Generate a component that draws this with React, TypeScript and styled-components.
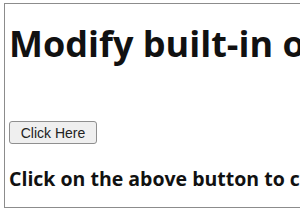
import React from 'react';
import styled, { createGlobalStyle } from 'styled-components';

const GlobalStyle = createGlobalStyle`
  html, body {
    margin: 0;
    padding: 0;
    background: #fff;
    overflow: hidden;
  }
`;

const Frame = styled.div`
  margin: 3px 0 0 4px;
  width: 340px;
  height: 205px;
  box-sizing: border-box;
  border: 1px solid #8c8c8c;
  border-right: none;
  padding: 0 0 0 4px;
  display: flex;
  flex-direction: column;
  overflow: hidden;
  font-family: 'Open Sans', 'Noto Sans', sans-serif;
  color: #111;
`;

const Heading = styled.h1`
  margin: 20px 0 0 0;
  font-size: 36px;
  line-height: 40px;
  font-weight: 700;
  white-space: nowrap;
`;

const ClickButton = styled.button`
  margin-top: 57px;
  align-self: flex-start;
  width: 88px;
  height: 23px;
  padding: 0;
  font-family: Arial, 'Liberation Sans', sans-serif;
  font-size: 14px;
  color: #222;
  background: #efefef;
  border: 1px solid #8f8f8f;
  border-radius: 3px;
`;

const Note = styled.p`
  margin: 23px 0 0 0;
  font-size: 19.5px;
  line-height: 24px;
  font-weight: 700;
  white-space: nowrap;
`;

export default function App() {
  return (
    <>
      <GlobalStyle />
      <Frame>
        <Heading>Modify built-in object</Heading>
        <ClickButton>Click Here</ClickButton>
        <Note>Click on the above button to call the modified function</Note>
      </Frame>
    </>
  );
}
